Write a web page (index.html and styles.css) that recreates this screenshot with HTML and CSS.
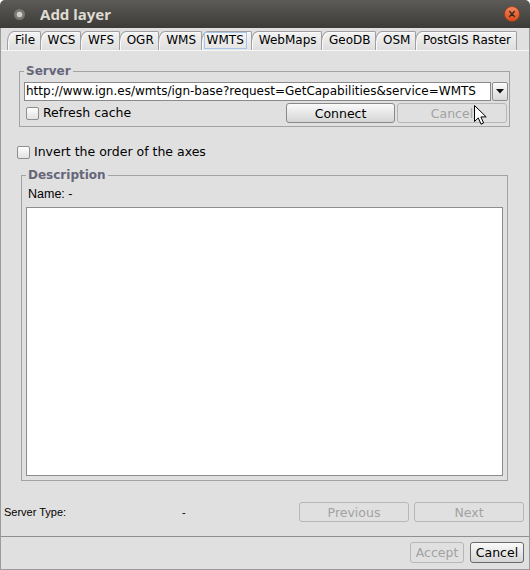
FILE: index.html
```html
<!DOCTYPE html>
<html>
<head>
<meta charset="utf-8">
<title>Add layer</title>
<link rel="stylesheet" href="styles.css">
</head>
<body>
<div class="window">
  <div class="titlebar">
    <span class="tb-icon"></span>
    <span class="tb-title">Add layer</span>
    <span class="tb-close">
      <svg width="16" height="16" viewBox="0 0 16 16">
        <defs>
          <linearGradient id="cg" x1="0" y1="0" x2="0" y2="1">
            <stop offset="0" stop-color="#f58a5e"/>
            <stop offset="1" stop-color="#d8481a"/>
          </linearGradient>
        </defs>
        <circle cx="8" cy="8" r="7.5" fill="url(#cg)" stroke="#9a3a16" stroke-width="0.8"/>
        <path d="M5.6 5.6 L10.4 10.4 M10.4 5.6 L5.6 10.4" stroke="#3b2a22" stroke-width="1.4" stroke-linecap="round"/>
      </svg>
    </span>
  </div>
  <div class="frame">
    <div class="tabs">
      <div class="tab">File</div>
      <div class="tab">WCS</div>
      <div class="tab">WFS</div>
      <div class="tab">OGR</div>
      <div class="tab">WMS</div>
      <div class="tab sel"><span class="focus">WMTS</span></div>
      <div class="tab">WebMaps</div>
      <div class="tab">GeoDB</div>
      <div class="tab">OSM</div>
      <div class="tab">PostGIS Raster</div>
    </div>
    <div class="panel">
      <fieldset class="group server">
        <legend>Server</legend>
        <div class="combo">
          <div class="combo-text">http://www.ign.es/wmts/ign-base?request=GetCapabilities&amp;service=WMTS</div>
          <div class="combo-btn">
            <svg width="8" height="5" viewBox="0 0 8 5"><path d="M0 0 H8 L4 4.5 Z" fill="#111"/></svg>
          </div>
        </div>
        <div class="server-row">
          <label class="check refresh"><span class="box"></span>Refresh cache</label>
          <div class="btns">
            <button class="btn connect">Connect</button>
            <button class="btn dis cancel1">Cancel</button>
          </div>
        </div>
      </fieldset>
      <label class="check invert"><span class="box"></span>Invert the order of the axes</label>
      <fieldset class="group desc">
        <legend>Description</legend>
        <div class="name">Name: -</div>
        <div class="desc-box"></div>
      </fieldset>
      <div class="footer">
        <span class="st-label">Server Type:</span>
        <span class="st-value">-</span>
        <div class="nav">
          <button class="btn dis navbtn">Previous</button>
          <button class="btn dis navbtn">Next</button>
        </div>
      </div>
    </div>
    <div class="bottombar">
      <button class="btn dis small">Accept</button>
      <button class="btn def small">Cancel</button>
    </div>
  </div>
  <svg class="cursor" width="14" height="21" viewBox="0 0 14 21">
    <path d="M0.5 0.5 L0.5 16.5 L4.3 12.9 L7 19.2 L9.6 18 L6.9 11.9 L12.2 11.9 Z" fill="#fff" stroke="#000" stroke-width="1" stroke-linejoin="round"/>
  </svg>
</div>
</body>
</html>
```
FILE: styles.css
```css
html, body {
  margin: 0;
  padding: 0;
  background: #ffffff;
}
body {
  width: 530px;
  height: 570px;
  overflow: hidden;
  font-family: "DejaVu Sans", sans-serif;
  font-size: 12px;
  color: #000;
}
.window {
  position: relative;
  width: 530px;
  height: 570px;
  display: flex;
  flex-direction: column;
}
.titlebar {
  height: 28px;
  flex: none;
  display: flex;
  align-items: center;
  box-sizing: border-box;
  padding: 0 10px 0 14px;
  background: linear-gradient(#5c5b57, #3c3b37);
  border-radius: 5px 5px 0 0;
}
.tb-icon {
  width: 11px;
  height: 11px;
  border-radius: 50%;
  background: radial-gradient(circle, #cfcdc7 0 2.6px, #7a7873 3.2px);
}
.tb-title {
  margin-left: 15px;
  color: #dfdbd2;
  font-family: "Noto Sans", sans-serif;
  font-weight: bold;
  font-size: 15px;
  line-height: 18px;
}
.tb-close {
  margin-left: auto;
  width: 16px;
  height: 16px;
  display: flex;
}
.frame {
  flex: 1;
  min-height: 0;
  display: flex;
  flex-direction: column;
  background: #e0e0e0;
  border: 1px solid #9b9b9b;
  border-top: none;
}
.tabs {
  display: flex;
  height: 23px;
  box-sizing: border-box;
  padding: 3px 0 0 6px;
  border-bottom: 1px solid #f7f7f7;
}
.tab {
  height: 19px;
  box-sizing: border-box;
  border: 1px solid #a0a0a0;
  border-bottom: none;
  border-radius: 7px 2px 0 0 / 11px 2px 0 0;
  background: linear-gradient(#f3f3f3, #dedede);
  box-shadow: inset 1px 1px 0 #fbfbfb;
  padding: 0 4.5px 0 7px;
  line-height: 17px;
  margin-right: -1px;
  white-space: nowrap;
}
.tab.sel {
  padding: 0 4px 0 2px;
  background: linear-gradient(#f6f6f6, #e4e4e4);
}
.tab .focus {
  display: block;
  height: 17px;
  box-sizing: border-box;
  line-height: 15px;
  border: 1px solid #a8c6e8;
  padding: 0 2px;
}
.panel {
  flex: 1;
  min-height: 0;
  display: flex;
  flex-direction: column;
  padding-bottom: 14px;
}
.group {
  margin: 0;
  min-width: 0;
  border: 1px solid #a3a3a3;
}
.group legend {
  padding: 0 2px;
  font-weight: bold;
  font-size: 12px;
  line-height: 14px;
  color: #66667a;
}
.server {
  margin: 13px 19px 0 18px;
  padding: 4px 1px 3px 4px;
}
.combo {
  display: flex;
  height: 19px;
}
.combo-text {
  flex: 1;
  min-width: 0;
  box-sizing: border-box;
  background: #fff;
  border: 1px solid #8a8a8a;
  padding-left: 1px;
  line-height: 17px;
  white-space: nowrap;
  overflow: hidden;
}
.combo-btn {
  width: 16px;
  margin-left: 1px;
  box-sizing: border-box;
  border: 1px solid #8d8d8d;
  border-radius: 2px;
  background: linear-gradient(#fbfbfb, #d9d9d9);
  display: flex;
  align-items: center;
  justify-content: center;
}
.server-row {
  display: flex;
  align-items: center;
  height: 20px;
  margin-top: 2px;
}
.check {
  display: flex;
  align-items: center;
  gap: 4px;
  line-height: 14px;
  font-size: 12.5px;
}
.box {
  width: 13px;
  height: 13px;
  box-sizing: border-box;
  border: 1px solid #8e8e8e;
  border-radius: 2px;
  background: linear-gradient(#fdfdfd, #e2e2e2);
}
.refresh {
  margin-left: 2px;
}
.btns {
  margin-left: auto;
  margin-right: 1px;
  display: flex;
  gap: 2px;
}
.btn {
  height: 20px;
  box-sizing: border-box;
  padding: 0;
  border: 1px solid #8a8a8a;
  border-radius: 3px;
  background: linear-gradient(#fafafa, #d5d5d5);
  font-family: "DejaVu Sans", sans-serif;
  font-size: 12.5px;
  color: #000;
}
.btn.dis {
  border-color: #b7b7b7;
  background: #e0e0e0;
  color: #a2a2a2;
}
.btn.def {
  border-color: #6a6a6a;
}
.connect {
  width: 109px;
}
.cancel1 {
  width: 110px;
}
.invert {
  margin: 18px 0 0 16px;
  height: 14px;
}
.desc {
  flex: 1;
  min-height: 0;
  margin: 9px 21px 0 20px;
  padding: 5px 4px 4px 4px;
  display: flex;
  flex-direction: column;
}
.name {
  font-family: "Liberation Sans", Arial, sans-serif;
  font-size: 12.5px;
  line-height: 14px;
  margin-left: 2px;
}
.desc-box {
  flex: 1;
  margin-top: 6px;
  background: #fff;
  border: 1px solid #8c8c8c;
}
.footer {
  display: flex;
  align-items: center;
  height: 20px;
  margin-top: 21px;
  padding: 0 5px 0 3px;
  font-family: "Liberation Sans", Arial, sans-serif;
  font-size: 11px;
}
.st-label {
  width: 178px;
}
.nav {
  margin-left: auto;
  display: flex;
  gap: 5px;
}
.navbtn {
  width: 110px;
}
.bottombar {
  display: flex;
  justify-content: flex-end;
  gap: 6px;
  border-top: 1px solid #8f8f8f;
  padding: 5px 5px 6px;
}
.btn.small {
  width: 54px;
  height: 21px;
}
.cursor {
  position: absolute;
  left: 474px;
  top: 105px;
}
```
